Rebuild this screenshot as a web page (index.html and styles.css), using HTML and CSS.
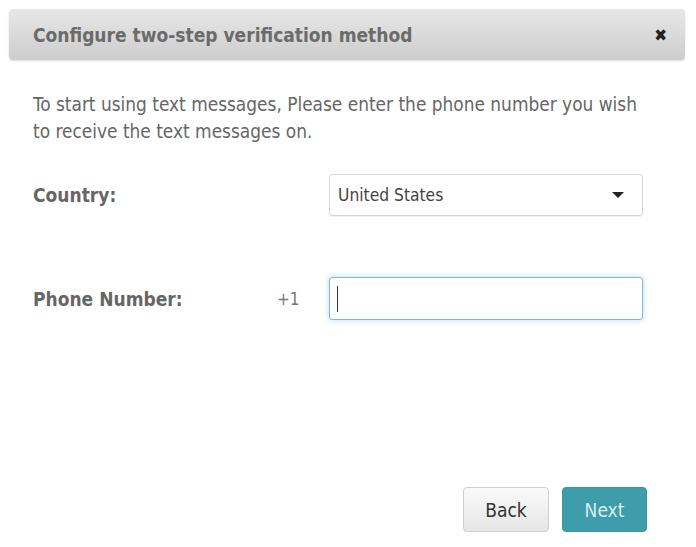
FILE: index.html
```html
<!DOCTYPE html>
<html>
  <head>
    <title>Configure two-step verification method</title>
    <meta charset="UTF-8">
    <meta name="viewport" content="width=device-width, initial-scale=1.0">

  <!--CSS-->
    <link rel="stylesheet" href="styles.css">
  </head>

<!--BODY-->
<body>

  <div class="dialog">

    <!--Header-->
    <div class="dialog-header">
      <span class="dialog-title">Configure two-step verification method</span>
      <span class="close">&#10006;</span>
    </div>

    <!--Content-->
    <div class="dialog-body">
      <p class="intro">To start using text messages, Please enter the phone number you wish to receive the text messages on.</p>

      <div class="form-row">
        <label class="label">Country:</label>
        <span class="prefix"></span>
        <div class="select">
          <span>United States</span>
          <span class="caret"></span>
        </div>
      </div>

      <div class="form-row phone-row">
        <label class="label">Phone Number:</label>
        <span class="prefix">+1</span>
        <div class="input"><span class="cursor"></span></div>
      </div>
    </div>

    <!--Buttons-->
    <div class="dialog-footer">
      <button class="btn back">Back</button>
      <button class="btn next">Next</button>
    </div>

  </div>

</body>
</html>
```

FILE: styles.css
```css
html, body {
  margin: 0;
  padding: 0;
  background-color: #fff;
  font-family: "DejaVu Sans", Verdana, sans-serif;
  font-stretch: condensed;
}

.dialog {
  width: 676px;
  padding: 9px 0 0 9px;
}

.dialog-header {
  height: 51px;
  box-sizing: border-box;
  display: flex;
  align-items: center;
  justify-content: space-between;
  padding: 0 18px 0 24px;
  background: linear-gradient(#e7e7e7, #cdcdcd);
  border-radius: 4px;
  box-shadow: 0 1px 2px rgba(0, 0, 0, 0.15);
}

.dialog-title {
  font-size: 19px;
  font-weight: bold;
  color: #6b6b6b;
}

.close {
  font-size: 17px;
  color: #222;
  font-weight: bold;
}

.dialog-body {
  padding: 0 24px;
}

.intro {
  max-width: 625px;
  margin: 31px 0 29px;
  font-size: 18.9px;
  line-height: 27px;
  color: #666;
}

.form-row {
  display: grid;
  grid-template-columns: 244px 52px 314px;
  align-items: center;
}

.phone-row {
  margin-top: 61px;
}

.label {
  font-size: 19px;
  font-weight: bold;
  color: #666;
}

.prefix {
  font-size: 17px;
  color: #777;
}

.select {
  height: 42px;
  box-sizing: border-box;
  display: flex;
  align-items: center;
  justify-content: space-between;
  padding: 0 18px 0 8px;
  border: 1px solid #d4d4d4;
  border-radius: 3px;
  box-shadow: 0 1px 1px rgba(0, 0, 0, 0.06);
  font-size: 17.3px;
  color: #444;
}

.caret {
  width: 0;
  height: 0;
  border-left: 6px solid transparent;
  border-right: 6px solid transparent;
  border-top: 6px solid #222;
}

.input {
  height: 43px;
  box-sizing: border-box;
  display: flex;
  align-items: center;
  padding-left: 7px;
  border: 1px solid #86b4d4;
  border-radius: 3px;
  box-shadow: 0 0 6px rgba(102, 175, 233, 0.45);
}

.cursor {
  width: 1px;
  height: 26px;
  background-color: #333;
}

.dialog-footer {
  display: flex;
  justify-content: flex-end;
  gap: 13px;
  padding-right: 38px;
  margin-top: 167px;
}

.btn {
  height: 45px;
  border-radius: 4px;
  font-family: "DejaVu Sans", Verdana, sans-serif;
  font-stretch: condensed;
  font-size: 19px;
  cursor: pointer;
}

.back {
  width: 86px;
  background: linear-gradient(#fafafa, #e6e6e6);
  border: 1px solid #cfcfcf;
  color: #333;
}

.next {
  width: 85px;
  background-color: #3f9dab;
  border: 1px solid #3a95a3;
  color: #d6eff2;
}
```
